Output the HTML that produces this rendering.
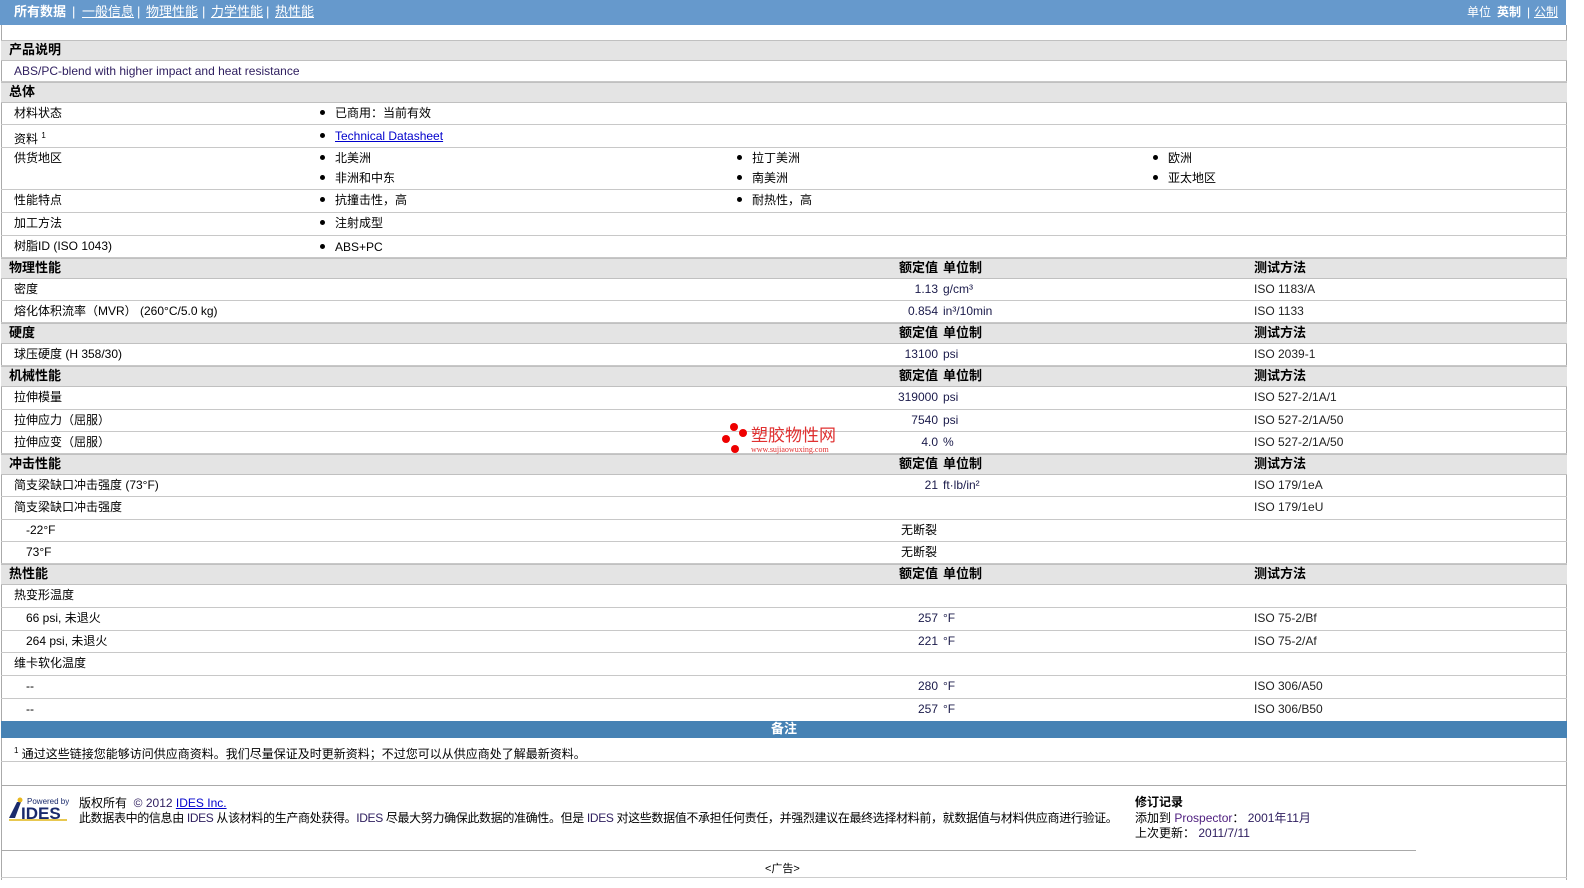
<!DOCTYPE html>
<html><head><meta charset="utf-8"><style>
*{margin:0;padding:0;box-sizing:border-box}
body{width:1584px;height:888px;background:#fff;font-family:"Liberation Sans","Noto Sans CJK SC",sans-serif;font-size:12px;line-height:15px;color:#000;position:relative;overflow:hidden}
.a{position:absolute;white-space:nowrap}
.bar{position:absolute;left:0;width:1566px;height:25px;top:0;background:#6699cc;color:#fff;font-size:13px}
.bar .a{top:4px;line-height:16px}
.r{position:absolute;left:1px;width:1566px;border-bottom:1px solid #c8c8c8}
.h{background:#e4e4e4;font-weight:bold;font-size:13px;border-top:1px solid #c0c0c0;border-bottom:1px solid #c0c0c0}
.r span{position:absolute;white-space:nowrap;top:3px;line-height:15px}
.h span{top:1px}
.l{left:13px}
.v{right:629px;text-align:right;color:#1a1a4a}
.u{left:942px;color:#1a1a4a}
.t{left:1253px;color:#222}
.b1{left:319px}.b2{left:736px}.b3{left:1152px}
.dot{display:inline-block;width:5px;height:5px;border-radius:50%;background:#000;margin-right:10px;vertical-align:2px}
a{color:#00c}
</style></head><body>
<div class="bar">
<span class="a" style="left:14px;font-weight:bold">所有数据</span>
<span class="a" style="left:72px">|</span>
<span class="a" style="left:82px;text-decoration:underline">一般信息</span>
<span class="a" style="left:137px">|</span>
<span class="a" style="left:146px;text-decoration:underline">物理性能</span>
<span class="a" style="left:202px">|</span>
<span class="a" style="left:211px;text-decoration:underline">力学性能</span>
<span class="a" style="left:266px">|</span>
<span class="a" style="left:275px;text-decoration:underline">热性能</span>
<span class="a" style="left:1467px;font-size:12px">单位</span>
<span class="a" style="left:1497px;font-weight:bold;font-size:12px">英制</span>
<span class="a" style="left:1527px;font-size:12px">|</span>
<span class="a" style="left:1534px;text-decoration:underline;font-size:12px">公制</span>
</div>
<div class="a" style="left:1px;top:25px;width:1px;height:855px;background:#aaa"></div>
<div class="a" style="left:1566px;top:25px;width:1px;height:855px;background:#aaa"></div>

<div class="r h" style="top:40px;height:21px"><span style="left:8px">产品说明</span></div>
<div class="r" style="top:61px;height:21px"><span class="l" style="color:#302060">ABS/PC-blend with higher impact and heat resistance</span></div>
<div class="r h" style="top:82px;height:21px"><span style="left:8px">总体</span></div>
<div class="r" style="top:103px;height:22px"><span class="l">材料状态</span><span class="b1"><i class="dot"></i>已商用：当前有效</span></div>
<div class="r" style="top:125px;height:23px"><span class="l">资料 <sup style="font-size:8px">1</sup></span><span class="b1" style="top:4px"><i class="dot"></i><a href="#">Technical Datasheet</a></span></div>
<div class="r" style="top:148px;height:42px"><span class="l">供货地区</span>
<span class="b1"><i class="dot"></i>北美洲</span><span class="b2"><i class="dot"></i>拉丁美洲</span><span class="b3"><i class="dot"></i>欧洲</span>
<span class="b1" style="top:23px"><i class="dot"></i>非洲和中东</span><span class="b2" style="top:23px"><i class="dot"></i>南美洲</span><span class="b3" style="top:23px"><i class="dot"></i>亚太地区</span></div>
<div class="r" style="top:190px;height:23px"><span class="l">性能特点</span><span class="b1"><i class="dot"></i>抗撞击性，高</span><span class="b2"><i class="dot"></i>耐热性，高</span></div>
<div class="r" style="top:213px;height:23px"><span class="l">加工方法</span><span class="b1"><i class="dot"></i>注射成型</span></div>
<div class="r" style="top:236px;height:22px"><span class="l">树脂ID (ISO 1043)</span><span class="b1" style="top:4px"><i class="dot"></i>ABS+PC</span></div>

<div class="r h" style="top:258px;height:21px"><span style="left:8px">物理性能</span><span style="right:629px">额定值</span><span style="left:942px">单位制</span><span style="left:1253px">测试方法</span></div>
<div class="r" style="top:279px;height:22px"><span class="l">密度</span><span class="v">1.13</span><span class="u">g/cm³</span><span class="t">ISO 1183/A</span></div>
<div class="r" style="top:301px;height:22px"><span class="l">熔化体积流率（MVR） (260°C/5.0 kg)</span><span class="v">0.854</span><span class="u">in³/10min</span><span class="t">ISO 1133</span></div>
<div class="r h" style="top:323px;height:21px"><span style="left:8px">硬度</span><span style="right:629px">额定值</span><span style="left:942px">单位制</span><span style="left:1253px">测试方法</span></div>
<div class="r" style="top:344px;height:22px"><span class="l">球压硬度 (H 358/30)</span><span class="v">13100</span><span class="u">psi</span><span class="t">ISO 2039-1</span></div>
<div class="r h" style="top:366px;height:21px"><span style="left:8px">机械性能</span><span style="right:629px">额定值</span><span style="left:942px">单位制</span><span style="left:1253px">测试方法</span></div>
<div class="r" style="top:387px;height:23px"><span class="l">拉伸模量</span><span class="v">319000</span><span class="u">psi</span><span class="t">ISO 527-2/1A/1</span></div>
<div class="r" style="top:410px;height:22px"><span class="l">拉伸应力（屈服）</span><span class="v">7540</span><span class="u">psi</span><span class="t">ISO 527-2/1A/50</span></div>
<div class="r" style="top:432px;height:22px"><span class="l">拉伸应变（屈服）</span><span class="v">4.0</span><span class="u">%</span><span class="t">ISO 527-2/1A/50</span></div>
<div class="r h" style="top:454px;height:21px"><span style="left:8px">冲击性能</span><span style="right:629px">额定值</span><span style="left:942px">单位制</span><span style="left:1253px">测试方法</span></div>
<div class="r" style="top:475px;height:22px"><span class="l">简支梁缺口冲击强度 (73°F)</span><span class="v">21</span><span class="u">ft·lb/in²</span><span class="t">ISO 179/1eA</span></div>
<div class="r" style="top:497px;height:23px"><span class="l">简支梁缺口冲击强度</span><span class="t">ISO 179/1eU</span></div>
<div class="r" style="top:520px;height:22px"><span style="left:25px">-22°F</span><span style="left:900px">无断裂</span></div>
<div class="r" style="top:542px;height:22px"><span style="left:25px">73°F</span><span style="left:900px">无断裂</span></div>
<div class="r h" style="top:564px;height:21px"><span style="left:8px">热性能</span><span style="right:629px">额定值</span><span style="left:942px">单位制</span><span style="left:1253px">测试方法</span></div>
<div class="r" style="top:585px;height:23px"><span class="l">热变形温度</span></div>
<div class="r" style="top:608px;height:23px"><span style="left:25px">66 psi, 未退火</span><span class="v">257</span><span class="u">°F</span><span class="t">ISO 75-2/Bf</span></div>
<div class="r" style="top:631px;height:22px"><span style="left:25px">264 psi, 未退火</span><span class="v">221</span><span class="u">°F</span><span class="t">ISO 75-2/Af</span></div>
<div class="r" style="top:653px;height:23px"><span class="l">维卡软化温度</span></div>
<div class="r" style="top:676px;height:23px"><span style="left:25px">--</span><span class="v">280</span><span class="u">°F</span><span class="t">ISO 306/A50</span></div>
<div class="r" style="top:699px;height:22px;border:none"><span style="left:25px">--</span><span class="v">257</span><span class="u">°F</span><span class="t">ISO 306/B50</span></div>
<div class="a" style="left:1px;top:721px;width:1566px;height:17px;background:#4682b4;color:#fff;font-weight:bold;font-size:13px;text-align:center;line-height:16px">备注</div>
<div class="r" style="top:738px;height:24px"><span style="left:13px;top:5px"><sup style="font-size:8px">1</sup> 通过这些链接您能够访问供应商资料。我们尽量保证及时更新资料；不过您可以从供应商处了解最新资料。</span></div>
<div class="r" style="top:762px;height:24px;border-bottom:1px solid #aaa"></div>

<div class="a" style="left:7px;top:796px;width:62px;height:26px">
<svg width="62" height="26"><polygon points="2,22 10,6 14,6 8,22" fill="#1a2a6c"/><circle cx="13" cy="4" r="2.5" fill="#e8b820"/><text x="20" y="8" font-size="8" fill="#1a2a6c" font-family="Liberation Sans">Powered by</text><text x="14" y="23" font-size="17" font-weight="bold" fill="#1a2a6c" font-family="Liberation Sans">IDES</text><rect x="2" y="23" width="58" height="2" fill="#e8c850"/></svg></div>
<span class="a" style="left:79px;top:796px">版权所有 &nbsp;<span style="color:#302060">© 2012</span> <a href="#">IDES Inc.</a></span>
<span class="a" style="left:79px;top:811px;letter-spacing:-0.35px">此数据表中的信息由 <span style="color:#302060">IDES</span> 从该材料的生产商处获得。<span style="color:#302060">IDES</span> 尽最大努力确保此数据的准确性。但是 <span style="color:#302060">IDES</span> 对这些数据值不承担任何责任，并强烈建议在最终选择材料前，就数据值与材料供应商进行验证。</span>
<span class="a" style="left:1135px;top:795px;font-weight:bold">修订记录</span>
<span class="a" style="left:1135px;top:811px">添加到 <span style="color:#502080">Prospector</span>： <span style="color:#302060">2001年11月</span></span>
<span class="a" style="left:1135px;top:826px">上次更新： <span style="color:#302060">2011/7/11</span></span>
<div class="a" style="left:1px;top:850px;width:1415px;height:1px;background:#aaa"></div>
<span class="a" style="left:765px;top:862px;font-size:11px">&lt;广告&gt;</span>
<div class="a" style="left:1px;top:877px;width:1566px;height:1px;background:#ccc"></div>

<div class="a" style="left:721px;top:421px;width:30px;height:34px">
<svg width="30" height="34"><circle cx="13" cy="6" r="4" fill="#e00"/><circle cx="22" cy="12" r="4" fill="#e00"/><circle cx="5" cy="18" r="4" fill="#e00"/><circle cx="14" cy="28" r="4" fill="#e00"/></svg></div>
<span class="a" style="left:751px;top:426px;color:#e03030;font-size:17px;line-height:20px">塑胶物性网</span>
<span class="a" style="left:751px;top:445px;color:#e03030;font-size:8px;line-height:10px;font-family:'Liberation Serif',serif">www.sujiaowuxing.com</span>
</body></html>
